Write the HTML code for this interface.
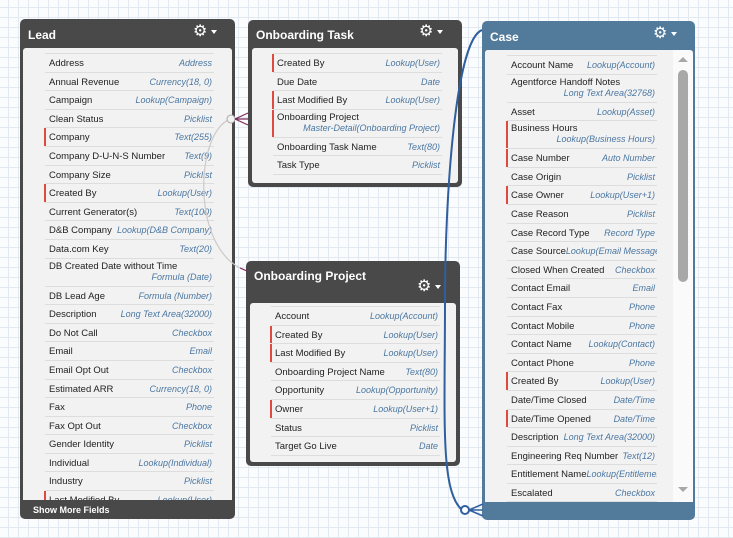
<!DOCTYPE html>
<html><head><meta charset="utf-8"><style>
*{box-sizing:border-box;margin:0;padding:0}
body{width:733px;height:538px;overflow:hidden;position:relative;font-family:"Liberation Sans",Arial,sans-serif;
background-color:#fbfcfe;
background-image:linear-gradient(#e3e9f1 1px,transparent 1px),linear-gradient(90deg,#e3e9f1 1px,transparent 1px);
background-size:10px 10px;background-position:-2px -3px}
.box{position:absolute;border-radius:5px;background:#494949}
.hd{position:absolute;left:8px;color:#fff;font-weight:bold;font-size:12px}
.gear{position:absolute;color:#fff;font-size:16px;line-height:16px}
.gear:after{content:"";position:absolute;left:18px;top:6px;border:3px solid transparent;border-top:4px solid #fff}
.body{position:absolute;background:#f2f2f2;border-radius:3px 3px 0 0;overflow:hidden}
.list{position:absolute;border-top:1px solid #ddd}
.r{position:relative;height:18.6px;line-height:13px;border-bottom:1px solid #ddd;font-size:9.5px;color:#222;display:flex;justify-content:space-between;align-items:baseline;padding:3px 2px 0 4px;white-space:nowrap}
.r i{color:#4a77a2;font-size:9px}
.r.d{height:28px;display:block;padding-top:2px;line-height:11px}
.r.d i{display:block;text-align:right;margin-top:0}
.r.red:before{content:"";position:absolute;left:-1px;top:0;bottom:0;width:2px;background:#e04a3e}
</style></head><body>

<!-- Lead -->
<div class="box" style="left:20px;top:19px;width:215px;height:500px">
<div class="hd" style="top:9px">Lead</div>
<div class="gear" style="left:173px;top:5px">⚙</div>
<div class="body" style="left:3px;top:29px;width:209px;height:452px">
<div class="list" style="left:22px;top:5px;width:169px">
<div class="r"><span>Address</span><i>Address</i></div>
<div class="r"><span>Annual Revenue</span><i>Currency(18, 0)</i></div>
<div class="r"><span>Campaign</span><i>Lookup(Campaign)</i></div>
<div class="r"><span>Clean Status</span><i>Picklist</i></div>
<div class="r red"><span>Company</span><i>Text(255)</i></div>
<div class="r"><span>Company D-U-N-S Number</span><i>Text(9)</i></div>
<div class="r"><span>Company Size</span><i>Picklist</i></div>
<div class="r red"><span>Created By</span><i>Lookup(User)</i></div>
<div class="r"><span>Current Generator(s)</span><i>Text(100)</i></div>
<div class="r"><span>D&amp;B Company</span><i>Lookup(D&amp;B Company)</i></div>
<div class="r"><span>Data.com Key</span><i>Text(20)</i></div>
<div class="r d"><span>DB Created Date without Time</span><i>Formula (Date)</i></div>
<div class="r"><span>DB Lead Age</span><i>Formula (Number)</i></div>
<div class="r"><span>Description</span><i>Long Text Area(32000)</i></div>
<div class="r"><span>Do Not Call</span><i>Checkbox</i></div>
<div class="r"><span>Email</span><i>Email</i></div>
<div class="r"><span>Email Opt Out</span><i>Checkbox</i></div>
<div class="r"><span>Estimated ARR</span><i>Currency(18, 0)</i></div>
<div class="r"><span>Fax</span><i>Phone</i></div>
<div class="r"><span>Fax Opt Out</span><i>Checkbox</i></div>
<div class="r"><span>Gender Identity</span><i>Picklist</i></div>
<div class="r"><span>Individual</span><i>Lookup(Individual)</i></div>
<div class="r"><span>Industry</span><i>Picklist</i></div>
<div class="r red"><span>Last Modified By</span><i>Lookup(User)</i></div>
</div></div>
<div style="position:absolute;left:13px;top:486px;color:#fff;font-size:9px;font-weight:bold">Show More Fields</div>
</div>

<!-- Onboarding Task -->
<div class="box" style="left:248px;top:20px;width:214px;height:167px">
<div class="hd" style="top:8px">Onboarding Task</div>
<div class="gear" style="left:171px;top:4px">⚙</div>
<div class="body" style="left:4px;top:28px;width:206px;height:135px;border-radius:3px">
<div class="list" style="left:21px;top:5px;width:169px">
<div class="r red"><span>Created By</span><i>Lookup(User)</i></div>
<div class="r"><span>Due Date</span><i>Date</i></div>
<div class="r red"><span>Last Modified By</span><i>Lookup(User)</i></div>
<div class="r d red"><span>Onboarding Project</span><i>Master-Detail(Onboarding Project)</i></div>
<div class="r"><span>Onboarding Task Name</span><i>Text(80)</i></div>
<div class="r"><span>Task Type</span><i>Picklist</i></div>
</div></div></div>

<!-- Onboarding Project -->
<div class="box" style="left:246px;top:261px;width:214px;height:205px">
<div class="hd" style="top:8px">Onboarding Project</div>
<div class="gear" style="left:171px;top:18px">⚙</div>
<div class="body" style="left:4px;top:42px;width:206px;height:159px;border-radius:3px">
<div class="list" style="left:21px;top:3px;width:169px">
<div class="r"><span>Account</span><i>Lookup(Account)</i></div>
<div class="r red"><span>Created By</span><i>Lookup(User)</i></div>
<div class="r red"><span>Last Modified By</span><i>Lookup(User)</i></div>
<div class="r"><span>Onboarding Project Name</span><i>Text(80)</i></div>
<div class="r"><span>Opportunity</span><i>Lookup(Opportunity)</i></div>
<div class="r red"><span>Owner</span><i>Lookup(User+1)</i></div>
<div class="r"><span>Status</span><i>Picklist</i></div>
<div class="r"><span>Target Go Live</span><i>Date</i></div>
</div></div></div>

<!-- Case -->
<div class="box" style="left:482px;top:21px;width:213px;height:499px;background:#527a9b">
<div class="hd" style="top:9px">Case</div>
<div class="gear" style="left:171px;top:5px">⚙</div>
<div class="body" style="left:3px;top:29px;width:208px;height:452px;background:#fafafa">
<div style="position:absolute;left:0;top:0;width:188px;height:452px;background:#f2f2f2"></div>
<div style="position:absolute;left:193px;top:20px;width:10px;height:212px;border-radius:5px;background:#a8a8a8"></div>
<div style="position:absolute;left:193px;top:7px;border:5px solid transparent;border-bottom:5px solid #a8a8a8;border-top:0"></div>
<div style="position:absolute;left:193px;top:437px;border:5px solid transparent;border-top:5px solid #a8a8a8;border-bottom:0"></div>
<div class="list" style="left:22px;top:5px;width:150px">
<div class="r"><span>Account Name</span><i>Lookup(Account)</i></div>
<div class="r d"><span>Agentforce Handoff Notes</span><i>Long Text Area(32768)</i></div>
<div class="r"><span>Asset</span><i>Lookup(Asset)</i></div>
<div class="r d red"><span>Business Hours</span><i>Lookup(Business Hours)</i></div>
<div class="r red"><span>Case Number</span><i>Auto Number</i></div>
<div class="r"><span>Case Origin</span><i>Picklist</i></div>
<div class="r red"><span>Case Owner</span><i>Lookup(User+1)</i></div>
<div class="r"><span>Case Reason</span><i>Picklist</i></div>
<div class="r"><span>Case Record Type</span><i>Record Type</i></div>
<div class="r" style="overflow:hidden;justify-content:flex-start"><span>Case Source</span><i>Lookup(Email Message)</i></div>
<div class="r"><span>Closed When Created</span><i>Checkbox</i></div>
<div class="r"><span>Contact Email</span><i>Email</i></div>
<div class="r"><span>Contact Fax</span><i>Phone</i></div>
<div class="r"><span>Contact Mobile</span><i>Phone</i></div>
<div class="r"><span>Contact Name</span><i>Lookup(Contact)</i></div>
<div class="r"><span>Contact Phone</span><i>Phone</i></div>
<div class="r red"><span>Created By</span><i>Lookup(User)</i></div>
<div class="r"><span>Date/Time Closed</span><i>Date/Time</i></div>
<div class="r red"><span>Date/Time Opened</span><i>Date/Time</i></div>
<div class="r"><span>Description</span><i>Long Text Area(32000)</i></div>
<div class="r"><span>Engineering Req Number</span><i>Text(12)</i></div>
<div class="r" style="overflow:hidden;justify-content:flex-start"><span>Entitlement Name</span><i>Lookup(Entitlement)</i></div>
<div class="r"><span>Escalated</span><i>Checkbox</i></div>
</div></div></div>

<svg style="position:absolute;left:0;top:0" width="733" height="538">
<path d="M231 119 C195 130,190 250,245 270" fill="none" stroke="#cfc9c9" stroke-width="1.2"/>
<circle cx="231" cy="119" r="4" fill="#f2f2f2" stroke="#aaa"/>
<path d="M235 119 L248 113 M235 119 L248 119 M235 119 L248 125" stroke="#7a2a5a" stroke-width="1.2"/>
<path d="M240 268 L247 271" stroke="#7a2a5a" stroke-width="1.2"/>
<path d="M482 30 C455 40,445 200,445 300 C445 420,440 490,462 510" fill="none" stroke="#2f5f9f" stroke-width="2"/>
<circle cx="465" cy="510" r="4" fill="#fff" stroke="#2f5f9f" stroke-width="2"/>
<path d="M469 510 L483 504 M469 510 L483 510 M469 510 L483 516" stroke="#2f5f9f" stroke-width="1.5"/>
</svg>
</body></html>
